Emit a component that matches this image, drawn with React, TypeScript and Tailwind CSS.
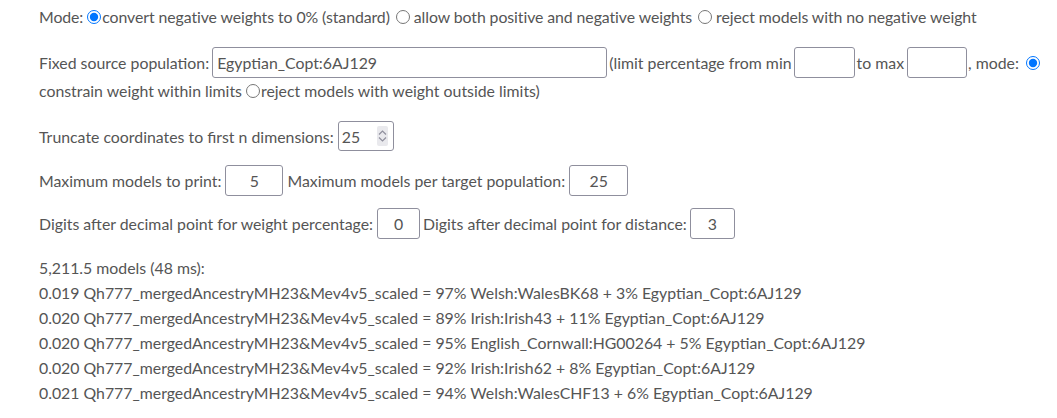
import { useState } from "react";

const results = [
  "0.019 Qh777_mergedAncestryMH23&Mev4v5_scaled = 97% Welsh:WalesBK68 + 3% Egyptian_Copt:6AJ129",
  "0.020 Qh777_mergedAncestryMH23&Mev4v5_scaled = 89% Irish:Irish43 + 11% Egyptian_Copt:6AJ129",
  "0.020 Qh777_mergedAncestryMH23&Mev4v5_scaled = 95% English_Cornwall:HG00264 + 5% Egyptian_Copt:6AJ129",
  "0.020 Qh777_mergedAncestryMH23&Mev4v5_scaled = 92% Irish:Irish62 + 8% Egyptian_Copt:6AJ129",
  "0.021 Qh777_mergedAncestryMH23&Mev4v5_scaled = 94% Welsh:WalesCHF13 + 6% Egyptian_Copt:6AJ129",
];

const box = "h-[31px] border border-[#8f8f9d] rounded-[3px] bg-white text-[15.85px] text-[#555] outline-none";
const radio = "w-[14px] h-[14px] shrink-0";

function Spinner() {
  return (
    <div className="w-[15px] h-[20px] bg-[#e9e9ed] rounded-[2px] flex flex-col items-center justify-center gap-[2px]">
      <svg width="9" height="5" viewBox="0 0 9 5" fill="none" stroke="#8f8f9d" strokeWidth="1.2">
        <path d="M1 4.5 L4.5 1 L8 4.5" />
      </svg>
      <svg width="9" height="5" viewBox="0 0 9 5" fill="none" stroke="#8f8f9d" strokeWidth="1.2">
        <path d="M1 0.5 L4.5 4 L8 0.5" />
      </svg>
    </div>
  );
}

export default function App() {
  const [mode, setMode] = useState("standard");
  const [limitMode, setLimitMode] = useState("constrain");

  return (
    <div className="min-h-screen bg-white pl-[39px] pt-[4px] text-[15.85px] leading-[25px] text-[#555] font-['Lato',sans-serif]">
      <div className="flex items-center whitespace-nowrap tracking-[-0.08px]">
        <span>Mode:&nbsp;</span>
        <input type="radio" name="mode" checked={mode === "standard"} onChange={() => setMode("standard")} className={`${radio} mr-[1px]`} />
        <span>convert negative weights to 0% (standard)</span>
        <input type="radio" name="mode" checked={mode === "both"} onChange={() => setMode("both")} className={`${radio} ml-[6px] mr-[4px]`} />
        <span>allow both positive and negative weights</span>
        <input type="radio" name="mode" checked={mode === "reject"} onChange={() => setMode("reject")} className={`${radio} ml-[6px] mr-[4px]`} />
        <span>reject models with no negative weight</span>
      </div>

      <div className="mt-[18px] flex items-center whitespace-nowrap">
        <span>Fixed source population:</span>
        <input type="text" defaultValue="Egyptian_Copt:6AJ129" className={`${box} w-[395px] px-[4px] ml-[3px] mr-[2px]`} />
        <span>(limit percentage from min</span>
        <input type="text" className={`${box} w-[61px] mx-[2px]`} />
        <span>to max</span>
        <input type="text" className={`${box} w-[60px] ml-[3px] mr-[1px]`} />
        <span>, mode:</span>
        <input type="radio" name="limit" checked={limitMode === "constrain"} onChange={() => setLimitMode("constrain")} className={`${radio} ml-[7px]`} />
      </div>
      <div className="flex items-center whitespace-nowrap">
        <span>constrain weight within limits&nbsp;</span>
        <input type="radio" name="limit" checked={limitMode === "reject"} onChange={() => setLimitMode("reject")} className={`${radio} mr-[1px]`} />
        <span>reject models with weight outside limits)</span>
      </div>

      <div className="mt-[18px] flex items-center whitespace-nowrap">
        <span>Truncate coordinates to first n dimensions:&nbsp;</span>
        <div className="h-[30px] w-[56px] border border-[#8f8f9d] rounded-[3px] flex items-center pl-[3px] pr-[5px] gap-[2px]">
          <input type="text" defaultValue="25" className="w-full min-w-0 text-[15.85px] text-[#555] outline-none bg-transparent" />
          <Spinner />
        </div>
      </div>

      <div className="mt-[14px] flex items-center whitespace-nowrap">
        <span>Maximum models to print:&nbsp;</span>
        <input type="text" defaultValue="5" className={`${box} w-[58px] text-center`} />
        <span>&nbsp;Maximum models per target population:&nbsp;</span>
        <input type="text" defaultValue="25" className={`${box} w-[59px] text-center`} />
      </div>

      <div className="mt-[12px] flex items-center whitespace-nowrap">
        <span>Digits after decimal point for weight percentage:&nbsp;</span>
        <input type="text" defaultValue="0" className={`${box} w-[43px] text-center mr-[3px]`} />
        <span>Digits after decimal point for distance:</span>
        <input type="text" defaultValue="3" className={`${box} w-[45px] text-center ml-[3px]`} />
      </div>

      <div className="mt-[16px]">
        <div>5,211.5 models (48 ms):</div>
        {results.map((r, i) => (
          <div key={i} className="whitespace-nowrap">{r}</div>
        ))}
      </div>
    </div>
  );
}
